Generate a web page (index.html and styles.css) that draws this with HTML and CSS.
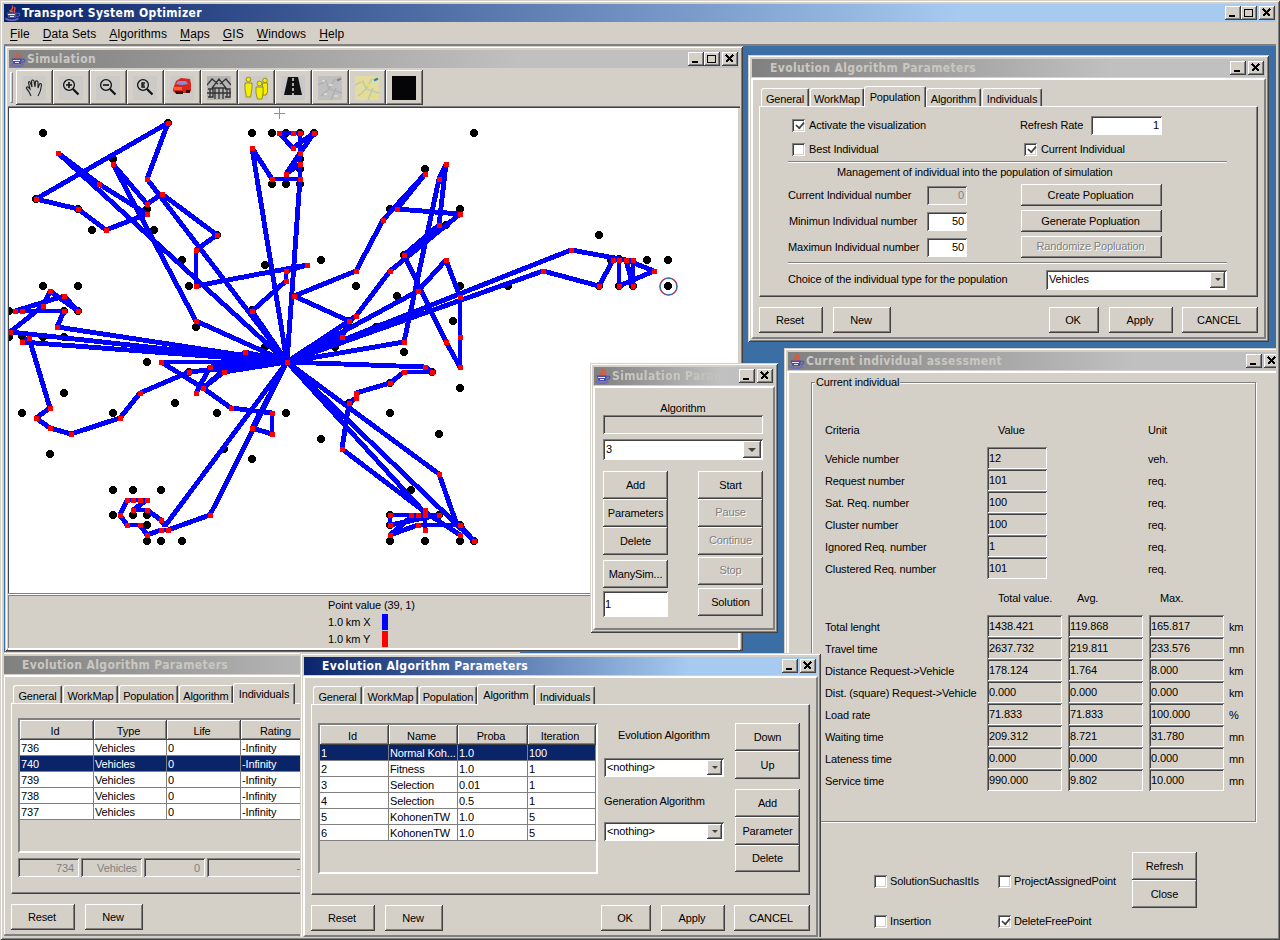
FILE: index.html
```html
<!DOCTYPE html>
<html lang="en">
<head>
<meta charset="utf-8">
<title>Transport System Optimizer</title>
<link rel="stylesheet" href="styles.css">
</head>
<body>
<svg width="0" height="0" class="defs">
  <symbol id="java" viewBox="0 0 16 16">
    <path d="M8 7.500C4 5 9 4 7.500 .5M10 8C8 6 11 5 9.500 2M6 7L4.500 5" fill="none" stroke="#e0553a" stroke-width="1.400"/>
    <path d="M1.500 7.500H12L11 13H3.500Z" fill="#4a4aa8"/><path d="M3 9.500H10M5 11.500H9" stroke="#e8e8ff"/>
    <path d="M12 8.500Q15.500 7.500 14.500 10.500L11.500 12" fill="none" stroke="#5555c0" stroke-width="1.300"/><path d="M.5 13.500Q7 17 13.500 13.500" fill="none" stroke="#6a6ac8" stroke-width="1.600"/>
  </symbol>
  <symbol id="min" viewBox="0 0 16 14"><path d="M4 9.500H10" stroke="#000" stroke-width="2"/></symbol>
  <symbol id="max" viewBox="0 0 16 14"><path d="M3.500 3H11.500V10.500H3.500ZM3.500 3.500H11.500" fill="none" stroke="#000"/></symbol>
  <symbol id="close" viewBox="0 0 16 14"><path d="M4 3L11 10M11 3L4 10" stroke="#000" stroke-width="1.700"/></symbol>
  <symbol id="lens" viewBox="0 0 24 24"><circle cx="10" cy="9" r="5.400" fill="none" stroke="#111" stroke-width="1.300"/><path d="M14 13L19.500 18.500" stroke="#111" stroke-width="2.200"/></symbol>
</svg>

<div class="app">
  <header class="title active"><svg class="java"><use href="#java"/></svg><span>Transport System Optimizer</span>
    <i class="cap"><svg><use href="#min"/></svg></i><i class="cap near"><svg><use href="#max"/></svg></i><i class="cap"><svg><use href="#close"/></svg></i></header>
  <nav class="menu"><span><u>F</u>ile</span><span><u>D</u>ata Sets</span><span><u>A</u>lgorithms</span><span><u>M</u>aps</span><span><u>G</u>IS</span><span><u>W</u>indows</span><span><u>H</u>elp</span></nav>

  <main class="desktop">
    <section class="win sim">
      <header class="title"><svg class="java"><use href="#java"/></svg><span>Simulation</span>
        <i class="cap"><svg><use href="#min"/></svg></i><i class="cap near"><svg><use href="#max"/></svg></i><i class="cap"><svg><use href="#close"/></svg></i></header>
      <div class="toolbar"><i class="grip"></i>
        <button class="tool"><svg viewBox="0 0 24 24"><path d="M9 20Q7 15 4.500 12.500Q4 10.500 6 11L8 13L6.500 7Q6.500 5 8 6L10 11L9.500 5Q10.500 3 12 5L13 11L13.500 5.500Q15 4 16 6L16 12L17.500 8Q19.500 7 19.500 9Q19 15 16 20" fill="none" stroke="#222" stroke-width="1.100"/></svg></button>
        <button class="tool"><svg><use href="#lens"/><path d="M7 9H13M10 6V12" stroke="#111" stroke-width="1.600"/></svg></button>
        <button class="tool"><svg><use href="#lens"/><path d="M7 9H13" stroke="#111" stroke-width="1.600"/></svg></button>
        <button class="tool"><svg><use href="#lens"/><path d="M12 7H9V11H12M9 9H11.500" fill="none" stroke="#111" stroke-width="1.300"/></svg></button>
        <button class="tool"><svg><path d="M3 13L6 5L11 2L20 3L21 8V15L18 17H5L3 15Z" fill="#d8261a"/><path d="M6 8L8 5L16 5L18 8L12 9Z" fill="#7b8fe0"/><path d="M4 11L12 11V14H4Z" fill="#ff5a3a"/><path d="M5 15H13V18H6ZM16 14H20V17H16Z" fill="#3a0d0d"/></svg></button>
        <button class="tool"><svg><path d="M0 0H24V24H0Z" fill="#b4b4b4"/><path d="M0 9L5 3L11 8M13 8L19 3L24 9M5 12L12 3L19 12H5M8 12V23M16 12V23M12 12V23M1 13H6V21H1M18 13H23V21H18M3 13V21M20 13V21M0 17H24" fill="none" stroke="#333" stroke-width="1.300"/></svg></button>
        <button class="tool"><svg fill="#f4ee00" stroke="#877f10" stroke-width=".8"><circle cx="21" cy="4.500" r="2.300"/><path d="M18.500 7H23.500V16L22 19H19Z"/><circle cx="4.500" cy="3.500" r="2.300"/><path d="M1 7H8V12L6.500 21H2.500L1 13Z"/><circle cx="15.500" cy="7.500" r="2.400"/><path d="M12 11H19V17L18 23H13.500L12 17Z"/></svg></button>
        <button class="tool"><svg><path d="M0 0H24V24H0Z" fill="#c9c9c9"/><path d="M7 1H17L21 19H3Z" fill="#111"/><path d="M12 2V19" stroke="#fff" stroke-width="1.300" stroke-dasharray="3 2"/></svg></button>
        <button class="tool"><svg><path d="M0 0H24V24H0Z" fill="#c0c0c0"/><path d="M0 9L8 5L11 13L24 17M3 20L10 14L17 3M13 24L18 12" fill="none" stroke="#b0b0b0" stroke-width="1.500"/><path d="M19 4.500L23 2.500" stroke="#888" stroke-width="2.500"/><path d="M4 5H7M11 9H15M6 18H9M16 20H20" stroke="#d5d5d5" stroke-width="2"/></svg></button>
        <button class="tool"><svg><path d="M0 0H24V24H0Z" fill="#e2dca0"/><path d="M0 9L8 5L11 13L24 17M3 20L10 14L17 3M13 24L18 12" fill="none" stroke="#c0cca0" stroke-width="1.500"/><path d="M19 4.500L23 2.500" stroke="#2b80d0" stroke-width="2.500"/><path d="M4 5H7M11 9H15M6 18H9M16 20H20" stroke="#f4d860" stroke-width="2"/></svg></button>
        <button class="tool last"><svg><path d="M0 0H24V24H0Z" fill="#050508"/></svg></button>
      </div>
      <div class="canvas">
        <svg viewBox="9 108 729 485" width="729" height="485">
          <path class="cross" d="M274 113.500H285M279.500 108V119"/>
          <path class="stop" d="M43 133h0M252 133h0M272 133h0M286 133h0M300 133h0M314 133h0M474 133h0M168 123h0M113 159h0M36 199h0M78 209h0M147 209h0M92 230h0M154 230h0M217 235h0M182 260h0M265 265h0M321 260h0M189 286h0M43 286h0M78 286h0M9 311h0M64 311h0M78 311h0M9 337h0M22 336h0M43 337h0M64 337h0M196 327h0M272 184h0M286 184h0M300 184h0M300 159h0M300 169h0M252 310h0M425 169h0M390 209h0M460 209h0M446 225h0M404 255h0M356 286h0M397 296h0M460 286h0M453 321h0M349 321h0M376 327h0M147 362h0M189 372h0M175 403h0M64 393h0M22 413h0M113 413h0M217 413h0M286 413h0M50 454h0M224 449h0M252 459h0M113 490h0M133 490h0M161 490h0M113 515h0M133 515h0M147 515h0M147 525h0M147 541h0M161 541h0M182 541h0M265 347h0M335 347h0M404 352h0M432 372h0M460 388h0M390 383h0M390 413h0M349 403h0M321 439h0M439 434h0M411 490h0M390 515h0M390 525h0M390 541h0M425 541h0M460 541h0M474 541h0M439 515h0M460 525h0M599 235h0M508 286h0M599 286h0M611 260h0M619 259h0M619 286h0M633 286h0M647 260h0M668 260h0M668 286h0"/>
          <path class="route" d="M287 362L58 153L99 184L147 214L106 230L78 209L36 199L168 123L147 179L287 362
            M287 362L196 321L113 164L147 204L162 194L217 235L196 250V286L307 265L286 271V281L252 311L287 362
            M287 362L252 148L272 179H300V133H279L293 148L314 133L300 153L286 174L300 164V179L287 362
            M287 362L342 337L349 321L294 296L356 271L383 220L425 174L397 209L460 214L390 271L356 316L349 321L287 362
            M287 362L404 342L439 179L446 164L439 225L404 255L446 342L460 367V297L446 260L418 291L287 362
            M287 362L543 271L599 286L613 260H633V286L626 260L633 260M619 260V286L654 271L626 260L571 250L287 362
            M287 362L57 327L64 311H15L64 296L78 311L50 291L43 306L10 332L287 362L22 342L29 338L50 408L36 418L50 428L71 434L120 418L140 393L189 372L287 362
            M287 362L161 362L203 388L231 408L272 413V434L252 428L287 362M287 362L224 372L203 388M203 388L245 352L287 362L210 367L196 393
            M287 362L165 526L161 520L147 510H133L147 500H127L120 515L127 525H140L147 535L161 530L168 530L210 515L287 362
            M287 362L425 367L432 372H404L390 383L356 393V398L349 403L342 449L425 512L460 535
            M287 362L439 474L457 525M287 362L474 541L460 525H418L390 535L411 517M287 362L425 513M390 515H439L390 525V515M425 510V530"/>
          <path class="node" d="M287 362h0M58 153h0M99 184h0M147 214h0M106 230h0M78 209h0M36 199h0M168 123h0M147 179h0M196 321h0M113 164h0M147 204h0M162 194h0M217 235h0M196 250h0M196 286h0M307 265h0M286 271h0M286 281h0M252 311h0M252 148h0M272 179h0M300 179h0M300 164h0M300 153h0M300 133h0M293 133h0M279 133h0M293 148h0M314 133h0M286 174h0M342 337h0M349 321h0M294 296h0M356 271h0M383 220h0M425 174h0M397 209h0M460 214h0M390 271h0M356 316h0M404 342h0M439 179h0M446 164h0M439 225h0M404 255h0M446 342h0M460 367h0M460 337h0M460 297h0M446 260h0M418 291h0M543 271h0M599 286h0M613 260h0M619 260h0M626 260h0M633 260h0M633 286h0M619 286h0M654 271h0M571 250h0M57 327h0M64 311h0M15 311h0M22 311h0M64 296h0M78 311h0M50 291h0M43 306h0M10 332h0M22 342h0M29 338h0M50 408h0M36 418h0M50 428h0M71 434h0M120 418h0M140 393h0M189 372h0M161 362h0M203 388h0M231 408h0M272 413h0M272 434h0M252 428h0M224 372h0M245 352h0M210 367h0M196 393h0M161 520h0M147 510h0M133 510h0M147 500h0M140 500h0M133 500h0M127 500h0M120 515h0M127 525h0M140 525h0M147 535h0M161 530h0M168 530h0M210 515h0M425 367h0M432 372h0M404 372h0M390 383h0M356 393h0M356 398h0M349 403h0M342 449h0M439 474h0M390 515h0M411 515h0M418 515h0M425 510h0M425 515h0M439 515h0M390 525h0M418 525h0M425 530h0M460 525h0M460 535h0M390 535h0M474 541h0"/>
          <circle cx="668.500" cy="286.500" r="8.700" fill="none" stroke="#c02040" stroke-width="1.200"/>
          <circle cx="668.500" cy="286.500" r="8.200" fill="none" stroke="#1880c8" stroke-width="1"/>
        </svg>
      </div>
      <footer class="status"><div>Point value (39, 1)</div><div>1.0 km X<i class="bar blue"></i></div><div>1.0 km Y<i class="bar red"></i></div></footer>
    </section>

    <section class="win pop">
      <header class="title"><span>Evolution Algorithm Parameters</span><i class="cap"><svg><use href="#min"/></svg></i><i class="cap"><svg><use href="#close"/></svg></i></header>
      <div class="body">
        <div class="tabs"><b class="w48">General</b><b class="w54">WorkMap</b><b class="on w62">Population</b><b class="w55">Algorithm</b><b class="w60">Individuals</b></div>
        <div class="panel popform">
          <div class="line"><span class="col"><i class="cb on"></i>Activate the visualization</span><span class="rate">Refresh Rate</span><span class="field white w71">1</span></div>
          <div class="line"><span class="col"><i class="cb"></i>Best Individual</span><span><i class="cb on"></i>Current Individual</span></div>
          <hr>
          <p class="caption">Management of individual into the population of simulation</p>
          <div class="num"><label>Current Individual number</label><span class="field dim">0</span><button class="btn">Create Popluation</button></div>
          <div class="num"><label class="in">Minimun Individual number</label><span class="field white">50</span><button class="btn">Generate Popluation</button></div>
          <div class="num"><label>Maximun Individual number</label><span class="field white">50</span><button class="btn off">Randomize Popluation</button></div>
          <hr class="second">
          <div class="choice"><label>Choice of the individual type for the population</label><span class="combo"><span>Vehicles</span><i></i></span></div>
        </div>
        <div class="actions"><button class="btn w64">Reset</button><button class="btn w58">New</button><button class="btn ok">OK</button><button class="btn w64">Apply</button><button class="btn cancel">CANCEL</button></div>
      </div>
    </section>

    <section class="win assess">
      <header class="title"><svg class="java"><use href="#java"/></svg><span>Current individual assessment</span><i class="cap"><svg><use href="#min"/></svg></i><i class="cap"><svg><use href="#close"/></svg></i></header>
      <div class="body">
        <div class="group">
          <div class="legend"><span>Current individual</span></div>
          <div class="crit head"><span>Criteria</span><span class="ind">Value</span><span>Unit</span></div>
          <div class="crit"><span>Vehicle number</span><span class="field">12</span><span>veh.</span></div>
          <div class="crit"><span>Request number</span><span class="field">101</span><span>req.</span></div>
          <div class="crit"><span>Sat. Req. number</span><span class="field">100</span><span>req.</span></div>
          <div class="crit"><span>Cluster number</span><span class="field">100</span><span>req.</span></div>
          <div class="crit"><span>Ignored Req. number</span><span class="field">1</span><span>req.</span></div>
          <div class="crit"><span>Clustered Req. number</span><span class="field">101</span><span>req.</span></div>
          <div class="stat head"><span></span><span class="ind">Total value.</span><span class="avg">Avg.</span><span class="ind">Max.</span></div>
          <div class="stat"><span>Total lenght</span><span class="field">1438.421</span><span class="field">119.868</span><span class="field">165.817</span><span>km</span></div>
          <div class="stat"><span>Travel time</span><span class="field">2637.732</span><span class="field">219.811</span><span class="field">233.576</span><span>mn</span></div>
          <div class="stat"><span>Distance Request-&gt;Vehicle</span><span class="field">178.124</span><span class="field">1.764</span><span class="field">8.000</span><span>km</span></div>
          <div class="stat"><span>Dist. (square) Request-&gt;Vehicle</span><span class="field">0.000</span><span class="field">0.000</span><span class="field">0.000</span><span>km</span></div>
          <div class="stat"><span>Load rate</span><span class="field">71.833</span><span class="field">71.833</span><span class="field">100.000</span><span>%</span></div>
          <div class="stat"><span>Waiting time</span><span class="field">209.312</span><span class="field">8.721</span><span class="field">31.780</span><span>mn</span></div>
          <div class="stat"><span>Lateness time</span><span class="field">0.000</span><span class="field">0.000</span><span class="field">0.000</span><span>mn</span></div>
          <div class="stat"><span>Service time</span><span class="field">990.000</span><span class="field">9.802</span><span class="field">10.000</span><span>mn</span></div>
        </div>
        <div class="foot">
          <div class="checks"><span><i class="cb"></i>SolutionSuchasItIs</span><span><i class="cb"></i>ProjectAssignedPoint</span><span><i class="cb"></i>Insertion</span><span><i class="cb on"></i>DeleteFreePoint</span></div>
          <div class="stack"><button class="btn">Refresh</button><button class="btn">Close</button></div>
        </div>
      </div>
    </section>

    <section class="win params">
      <header class="title"><svg class="java"><use href="#java"/></svg><span class="cut">Simulation Param</span><i class="cap"><svg><use href="#min"/></svg></i><i class="cap"><svg><use href="#close"/></svg></i></header>
      <div class="body">
        <p>Algorithm</p>
        <span class="field empty"></span>
        <span class="combo"><span>3</span><i></i></span>
        <div class="two">
          <div class="stack"><button class="btn">Add</button><button class="btn">Parameters</button><button class="btn">Delete</button><button class="btn many">ManySim...</button><span class="field white one">1</span></div>
          <div class="stack"><button class="btn">Start</button><button class="btn off">Pause</button><button class="btn off">Continue</button><button class="btn off stopb">Stop</button><button class="btn sol">Solution</button></div>
        </div>
      </div>
    </section>

    <section class="win indiv">
      <header class="title"><span>Evolution Algorithm Parameters</span></header>
      <div class="body">
        <div class="tabs"><b class="w49">General</b><b class="w55">WorkMap</b><b class="w59">Population</b><b class="w54">Algorithm</b><b class="on w62">Individuals</b></div>
        <div class="panel">
          <div class="table t1">
            <div class="tr th"><span>Id</span><span>Type</span><span>Life</span><span>Rating</span></div>
            <div class="tr"><span>736</span><span>Vehicles</span><span>0</span><span>-Infinity</span></div>
            <div class="tr sel"><span>740</span><span>Vehicles</span><span>0</span><span>-Infinity</span></div>
            <div class="tr"><span>739</span><span>Vehicles</span><span>0</span><span>-Infinity</span></div>
            <div class="tr"><span>738</span><span>Vehicles</span><span>0</span><span>-Infinity</span></div>
            <div class="tr"><span>737</span><span>Vehicles</span><span>0</span><span>-Infinity</span></div>
          </div>
          <div class="edit"><span class="field dim">734</span><span class="field dim">Vehicles</span><span class="field dim">0</span><span class="field dim wide">-</span></div>
        </div>
        <div class="actions"><button class="btn w64">Reset</button><button class="btn w58">New</button></div>
      </div>
    </section>

    <section class="win algo">
      <header class="title active"><span>Evolution Algorithm Parameters</span><i class="cap"><svg><use href="#min"/></svg></i><i class="cap"><svg><use href="#close"/></svg></i></header>
      <div class="body">
        <div class="tabs"><b class="w49">General</b><b class="w55">WorkMap</b><b class="w58">Population</b><b class="on w58">Algorithm</b><b class="w60">Individuals</b></div>
        <div class="panel cols">
          <div class="table t2">
            <div class="tr th"><span>Id</span><span>Name</span><span>Proba</span><span>Iteration</span></div>
            <div class="tr sel"><span>1</span><span>Normal Koh...</span><span>1.0</span><span>100</span></div>
            <div class="tr"><span>2</span><span>Fitness</span><span>1.0</span><span>1</span></div>
            <div class="tr"><span>3</span><span>Selection</span><span>0.01</span><span>1</span></div>
            <div class="tr"><span>4</span><span>Selection</span><span>0.5</span><span>1</span></div>
            <div class="tr"><span>5</span><span>KohonenTW</span><span>1.0</span><span>5</span></div>
            <div class="tr"><span>6</span><span>KohonenTW</span><span>1.0</span><span>5</span></div>
          </div>
          <div class="pick"><p class="evo">Evolution Algorithm</p><span class="combo"><span>&lt;nothing&gt;</span><i></i></span><p>Generation Algorithm</p><span class="combo"><span>&lt;nothing&gt;</span><i></i></span></div>
          <div class="stack"><button class="btn">Down</button><button class="btn">Up</button><button class="btn gap">Add</button><button class="btn">Parameter</button><button class="btn del">Delete</button></div>
        </div>
        <div class="actions"><button class="btn w64">Reset</button><button class="btn w58">New</button><button class="btn ok">OK</button><button class="btn w64">Apply</button><button class="btn cancel">CANCEL</button></div>
      </div>
    </section>
  </main>
</div>
</body>
</html>
```
FILE: styles.css
```css
* { box-sizing: border-box; margin: 0; padding: 0; }
body { width: 1280px; height: 940px; overflow: hidden; font: 11px/13px "Liberation Sans", Arial, sans-serif; letter-spacing: -.13px; color: #000; background: #d4d0c8; }
i { font-style: normal; }
span, label, p, b, button { white-space: nowrap; }
.defs { display: block; }
svg { display: block; }

.app { height: 940px; display: flex; flex-direction: column; padding: 4px; background: #d4d0c8; box-shadow: inset 1px 1px #d4d0c8, inset -1px -1px #404040, inset 2px 2px #fff, inset -2px -2px #808080; }
.title { flex: none; display: flex; align-items: center; height: 18px; padding: 0 1px 0 18px; background: linear-gradient(90deg, #808080, #c0c0c0 70%); color: #cac7c1; font: bold 12px/18px "DejaVu Sans Condensed", "DejaVu Sans", sans-serif; letter-spacing: .36px; }
.title.active { background: linear-gradient(90deg, #0a246a, #a6caf0 75%); color: #fff; }
.title span { flex: 1; }
.title .java { flex: none; width: 16px; height: 16px; margin: 0 1px 0 -17px; }
.cap { flex: none; width: 16px; height: 14px; margin-left: 2px; background: #d4d0c8; box-shadow: inset -1px -1px #404040, inset 1px 1px #fff, inset -2px -2px #808080; }
.cap.near { margin-left: 0; }
.cap svg { width: 16px; height: 14px; shape-rendering: crispEdges; }
.menu { height: 22px; display: flex; gap: 13px; padding: 5px 6px; font-size: 12px; line-height: 14px; letter-spacing: .1px; }
.menu u { text-underline-offset: 2px; }
.desktop { flex: 1; position: relative; overflow: hidden; margin: 0 0 -1px; background: #3a6ea5; border-top: 2px solid #808080; }

.win { position: absolute; display: flex; flex-direction: column; padding: 4px 3px 3px; background: #d4d0c8; box-shadow: inset 1px 1px #d4d0c8, inset -1px -1px #404040, inset 2px 2px #fff, inset -2px -2px #808080; }
.win > .title { margin: 0 1px; }
.body { flex: 1; margin-top: 1px; border: 2px solid; border-color: #fff #808080 #808080 #fff; box-shadow: inset -1px 0 #d4d0c8; }
.sim { left: 1px; top: 0; width: 738px; height: 605px; }
.pop { left: 744px; top: 9px; width: 521px; height: 287px; }
.assess { left: 780px; top: 302px; width: 501px; height: 600px; }
.params { left: 586px; top: 317px; width: 188px; height: 270px; }
.indiv { left: -4px; top: 606px; width: 520px; height: 287px; }
.algo { left: 296px; top: 607px; width: 521px; height: 287px; }

.btn { font: inherit; letter-spacing: inherit; color: inherit; border: 0; background: #d4d0c8; box-shadow: inset -1px -1px #404040, inset 1px 1px #fff, inset -2px -2px #808080; text-align: center; }
.btn.off { color: #808080; text-shadow: 1px 1px #fff; padding-bottom: 2px; }
.field { display: block; height: 19px; padding: 3px 3px 0 2px; line-height: 13px; box-shadow: inset 1px 1px #808080, inset -1px -1px #fff, inset 2px 2px #404040; }
.field.white { background: #fff; }
.field.dim { color: #808080; }
.combo { display: flex; height: 19px; background: #fff; box-shadow: inset 1px 1px #808080, inset -1px -1px #fff, inset 2px 2px #404040; padding: 2px; align-items: center; }
.combo span { flex: 1; padding-left: 1px; }
.combo i { width: 15px; height: 100%; background: #d4d0c8; box-shadow: inset -1px -1px #404040, inset 1px 1px #fff, inset -2px -2px #808080; display: flex; align-items: center; justify-content: center; }
.combo i::before { content: ""; border: 3px solid transparent; border-top: 3px solid #404040; border-bottom: 0; }
.cb { display: inline-block; vertical-align: -3px; width: 13px; height: 13px; margin: 0 4px 0 0; background: #fff; box-shadow: inset 1px 1px #808080, inset -1px -1px #fff, inset 2px 2px #404040, inset -2px -2px #d4d0c8; }
.cb.on::before { content: ""; display: block; width: 4px; height: 7px; margin: 1px 0 0 5px; border: solid #404040; border-width: 0 2px 2px 0; transform: rotate(40deg) scale(.9); }
hr { height: 2px; border: 0; border-top: 1px solid #808080; background: #fff; width: 439px; }

.toolbar { flex: none; display: flex; height: 37px; padding: 2px 0 0 2px; }
.grip { width: 3px; height: 31px; margin: 2px 3px 0 0; border: 1px solid #fff; border-right-color: #808080; border-bottom-color: #808080; }
.tool { flex: none; width: 37px; height: 35px; padding: 0 0 0 6px; border: 0; background: #d4d0c8; box-shadow: inset -1px -1px #404040, inset 1px 1px #fff, inset -2px -2px #808080; }
.tool svg { width: 24px; height: 24px; background: #cbcac7; }
.canvas { flex: none; height: 488px; margin-top: 1px; padding: 1px 0 0 1px; background: #d4d0c8; border: solid; border-color: #808080 #fff #808080 #808080; border-width: 1px 0 1px 0; box-shadow: inset 1px 1px #404040; overflow: hidden; }
.canvas svg { background: #fff; height: 485px; }
.canvas path { fill: none; shape-rendering: crispEdges; }
.cross { stroke: #00f020; }
.stop { stroke: #000; stroke-width: 8; stroke-linecap: round; }
.route { stroke: #00f; stroke-width: 4.900; stroke-linejoin: bevel; }
.node { stroke: #f00; stroke-width: 5; stroke-linecap: square; transform: translate(.5px, .5px); }
.status { flex: 1; padding: 2px 0 0 320px; line-height: 17px; border: solid #fff; border-width: 1px 2px 2px 0; box-shadow: inset 1px 1px #808080; }
.status div { display: flex; height: 17px; }
.bar { width: 6px; height: 16px; margin-left: 12px; }
.blue { background: #00f; }
.red { background: #f00; }

.tabs { display: flex; align-items: flex-end; height: 20px; margin: 6px 0 0 8px; }
.tabs b { height: 18px; padding-top: 4px; font-weight: normal; text-align: center; border: 1px solid #fff; border-bottom: 0; border-right-color: #404040; border-radius: 3px 2px 0 0; box-shadow: inset -1px 0 #808080; margin-right: 1px; }
.tabs b.on { position: relative; height: 21px; padding-top: 4px; margin: 0 0 -1px -1px; background: #d4d0c8; }
.w48 { width: 48px; } .w49 { width: 49px; } .w54 { width: 54px; } .w55 { width: 55px; } .w58 { width: 58px; } .w59 { width: 59px; } .w60 { width: 60px; } .w62 { width: 62px; } .w64 { width: 64px; } .w71 { width: 71px; }
.panel { width: 499px; height: 191px; margin-left: 6px; border: 1px solid; border-color: #fff #404040 #404040 #fff; box-shadow: inset -1px -1px #808080; }
.actions { display: flex; width: 499px; height: 26px; margin: 10px 0 0 6px; }
.actions .btn { padding-right: 2px; }
.actions .btn + .btn { margin-left: 10px; }
.actions .btn.ok { width: 50px; margin-left: auto; }
.actions .btn.cancel { width: 76px; margin-left: 9px; }

.popform { padding: 6px 0 0 28px; }
.line { display: flex; align-items: center; height: 24px; }
.line .col { width: 232px; }
.line .cb { margin-left: 4px; }
.line .rate { width: 71px; }
.line .field, .num .field { text-align: right; }
.caption { height: 18px; padding: 3px 0 0 49px; }
.num { display: grid; grid-template-columns: 139px 40px 141px; align-items: center; height: 26px; position: relative; top: 1px; }
.num .btn { width: 141px; height: 22px; margin-left: 54px; padding-right: 2px; }
.num .in { padding-left: 1px; }
hr.second { margin-top: 3px; }
.choice { display: flex; align-items: center; height: 31px; }
.choice label { width: 258px; }
.choice .combo { width: 181px; height: 20px; }

.group { width: 445px; height: 440px; margin: 9px 0 0 22px; padding-left: 13px; border: 1px solid #808080; box-shadow: 1px 1px #fff, inset 1px 1px #fff; }
.legend { height: 36px; margin-left: -10px; }
.legend span { display: inline-block; position: relative; top: -7px; background: #d4d0c8; padding: 0 1px; }
.crit, .stat { display: grid; grid-template-columns: 162px 161px auto; height: 22px; align-items: center; }
.crit > span, .stat > span { padding-top: 2px; }
.stat { grid-template-columns: 162px 81px 81px 80px auto; }
.crit .field, .stat .field { height: 22px; padding-top: 5px; width: 60px; }
.stat .field { width: 75px; letter-spacing: -.1px; }
.crit.head { height: 22px; margin-bottom: 6px; }
.crit.head > span, .stat.head > span { padding-top: 0; }
.stat.head { height: 20px; margin: 9px 0 7px; }
.ind { padding-left: 11px; }
.avg { padding-left: 9px; }
.foot { display: flex; padding: 30px 0 0 85px; }
.checks { display: grid; grid-template-columns: 124px 134px; grid-auto-rows: 40px; padding-top: 9px; height: 89px; }
.checks span { line-height: 40px; }
.checks .cb { margin-right: 3px; }
.stack { display: flex; flex-direction: column; width: 65px; }
.stack .btn { height: 28px; width: 65px; flex: none; }

.params .cut { overflow: hidden; -webkit-mask-image: linear-gradient(90deg, #000 60%, transparent); }
.params .body { padding: 14px 0 0 8px; }
.params p { width: 160px; text-align: center; height: 13px; }
.params .empty { width: 160px; }
.params .combo { width: 160px; height: 21px; margin-top: 5px; }
.params .combo i { width: 18px; }
.params .combo i::before { border-width: 4px 4px 0; }
.two { display: flex; gap: 30px; margin-top: 11px; }
.params .many { margin-top: 5px; }
.params .one { height: 26px; margin-top: 3px; padding-top: 7px; }
.params .stopb { margin-top: 2px; }
.params .sol { margin-top: 3px; }

.table { border: 2px solid; border-color: #808080 #fff #fff #808080; }
.tr { display: grid; height: 16px; background: #fff; }
.tr span { overflow: hidden; padding: 2px 0 0 1px; line-height: 12px; border: solid #808080; border-width: 0 1px 1px 0; }
.tr.sel { background: #0a246a; color: #fff; }
.tr.th { height: 20px; background: #d4d0c8; }
.th span { text-align: center; padding: 5px 4px 0 0; border: 0; box-shadow: inset -1px -1px #404040, inset 1px 1px #fff, inset -2px -2px #808080; }
.t1 { width: 296px; height: 135px; margin: 14px 0 0 6px; }
.t1 .tr { grid-template-columns: 74px 73px 74px 73px; }
.edit { display: flex; gap: 2px; margin: 5px 0 0 6px; }
.edit .field { width: 61px; text-align: right; padding-right: 5px; padding-top: 4px; }
.edit .wide { width: 98px; }
.cols { display: flex; }
.t2 { width: 280px; height: 151px; margin: 18px 0 0 6px; }
.t2 .tr { grid-template-columns: 69px 69px 70px 68px; }
.pick { width: 120px; margin: 24px 0 0 6px; }
.pick .evo { padding-left: 14px; height: 29px; }
.pick .combo + p { margin-top: 18px; height: 27px; }
.cols .stack { margin: 18px 0 0 11px; }
.cols .gap { margin-top: 10px; }
.cols .del { height: 27px; margin-top: 0; }
```
